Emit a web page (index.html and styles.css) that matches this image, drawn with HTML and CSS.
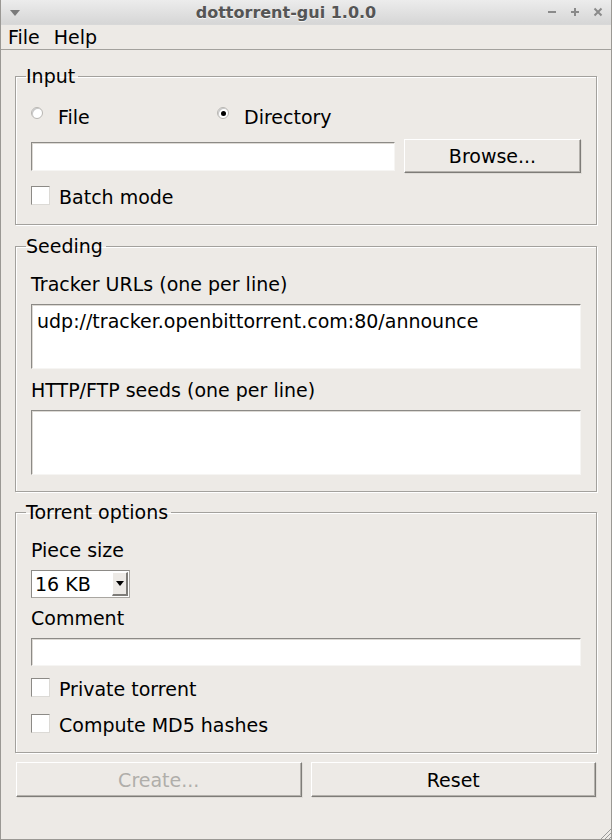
FILE: index.html
```html
<!DOCTYPE html>
<html>
<head>
<meta charset="utf-8">
<link rel="stylesheet" href="styles.css">
</head>
<body>
<div class="window">
  <div class="titlebar">
    <span class="tb-menu"><svg width="10" height="6" viewBox="0 0 10 6"><path d="M0 0H10L5 6Z" fill="#7a7a7a"/></svg></span>
    <span class="title">dottorrent-gui 1.0.0</span>
    <span class="tb-ctrls">
      <svg width="12" height="12" viewBox="0 0 12 12"><path d="M2 6H10" stroke="#8a8a8a" stroke-width="2"/></svg>
      <svg width="12" height="12" viewBox="0 0 12 12"><path d="M2 6H10M6 2V10" stroke="#8a8a8a" stroke-width="2"/></svg>
      <svg width="12" height="12" viewBox="0 0 12 12"><path d="M2.5 2.5L9.5 9.5M9.5 2.5L2.5 9.5" stroke="#8a8a8a" stroke-width="2"/></svg>
    </span>
  </div>
  <div class="menubar"><span>File</span><span>Help</span></div>
  <div class="content">
    <fieldset class="group group-input">
      <legend>Input</legend>
      <div class="radios">
        <label class="radio"><span class="rdot"></span>File</label>
        <label class="radio"><span class="rdot on"></span>Directory</label>
      </div>
      <div class="pathrow">
        <div class="entry path"></div>
        <div class="button browse">Browse...</div>
      </div>
      <label class="check"><span class="cbox"></span>Batch mode</label>
    </fieldset>
    <fieldset class="group group-seed">
      <legend>Seeding</legend>
      <div class="lbl">Tracker URLs (one per line)</div>
      <div class="entry area">udp://tracker.openbittorrent.com:80/announce</div>
      <div class="lbl lbl2">HTTP/FTP seeds (one per line)</div>
      <div class="entry area"></div>
    </fieldset>
    <fieldset class="group group-opts">
      <legend>Torrent options</legend>
      <div class="lbl">Piece size</div>
      <div class="combo"><span class="cval">16 KB</span><span class="carrow"><svg width="8" height="5" viewBox="0 0 8 5"><path d="M0 0H8L4 5Z" fill="#000"/></svg></span></div>
      <div class="lbl lbl3">Comment</div>
      <div class="entry comment"></div>
      <label class="check c2"><span class="cbox"></span>Private torrent</label>
      <label class="check c3"><span class="cbox"></span>Compute MD5 hashes</label>
    </fieldset>
    <div class="actions">
      <div class="button big disabled">Create...</div>
      <div class="button big">Reset</div>
    </div>
  </div>
  <div class="grip"><svg width="12" height="12" viewBox="0 0 12 12"><path d="M12 2L2 12M12 6L6 12M12 10L10 12" stroke="#9a9a9a" stroke-width="1"/></svg></div>
</div>
</body>
</html>
```
FILE: styles.css
```css
* { box-sizing: border-box; }
html, body { margin: 0; padding: 0; }
body {
  width: 612px; height: 840px; overflow: hidden;
  font-family: "DejaVu Sans", sans-serif;
  font-size: 19px; color: #000;
  background: #edeae6;
}
.window {
  position: relative;
  width: 612px; height: 840px;
  border: 1px solid #9a9894;
  border-top: none;
  background: #edeae6;
  display: flex; flex-direction: column;
}
.titlebar {
  height: 25px;
  background: linear-gradient(#ececec, #d6d6d6);
  display: flex; align-items: center;
  position: relative;
  border-bottom: 1px solid #d8d8d8;
}
.tb-menu { position: absolute; left: 9px; top: 9px; line-height: 0; }
.title {
  flex: 1; text-align: center;
  font-weight: bold; font-size: 16px; color: #555555;
  text-shadow: 0 1px 0 #f4f4f4;
  padding-left: 4px; padding-right: 44px;
}
.tb-ctrls {
  position: absolute; right: 7px; top: 6px;
  display: flex; gap: 11px; line-height: 0;
}
.menubar {
  height: 25px;
  display: flex; align-items: center; gap: 14px;
  padding-left: 7px;
  border-bottom: 1px solid #a3a19d;
  font-size: 19px;
}
.content {
  padding: 15px 14px 0 14px;
  display: flex; flex-direction: column;
}
.group {
  margin: 0; padding: 0 15px 0 15px;
  border: 1px solid #a3a19d;
  box-shadow: inset 1px 1px 0 #fff, 1px 1px 0 #fff;
  min-width: 0;
}
.group legend {
  padding: 0 3px 0 0; margin-left: -5px;
  font-size: 19px; line-height: 22px;
}
.group-input { height: 160px; }
.group-seed { height: 257px; margin-top: 10px; }
.group-opts { height: 252px; margin-top: 9px; }
.radios { display: flex; margin-top: 18px; height: 24px; align-items: center; }
.radio { display: flex; align-items: center; }
.radio:first-child { width: 186px; }
.rdot {
  width: 12px; height: 12px; border-radius: 50%;
  background: #fff;
  border: 1px solid #b8b6b2;
  box-shadow: inset 1px 1px 0 #c8c8c8;
  margin-left: 0; margin-right: 15px;
  position: relative; top: -4px;
  display: inline-flex; align-items: center; justify-content: center;
}
.rdot.on::after { content: ""; width: 5px; height: 5px; border-radius: 50%; background: #000; }
.pathrow { display: flex; align-items: center; margin-top: 10px; height: 34px; }
.entry {
  background: #fff;
  border-top: 1px solid #8c8a86; border-left: 1px solid #8c8a86;
  border-right: 1px solid #f6f5f3; border-bottom: 1px solid #f6f5f3;
  box-shadow: inset 1px 1px 0 #dddad5;
}
.path { width: 364px; height: 29px; margin-right: 9px; }
.button {
  display: flex; align-items: center; justify-content: center;
  background: #edeae6;
  border-top: 1px solid #fff; border-left: 1px solid #fff;
  border-right: 1px solid #7e7c78; border-bottom: 1px solid #7e7c78;
  box-shadow: inset -1px -1px 0 #b4b1ac, 1px 1px 0 #e0ddd8;
}
.browse { width: 177px; height: 34px; }
.check { display: flex; align-items: center; height: 24px; }
.group-input .check { margin-top: 12px; }
.cbox {
  width: 19px; height: 19px; background: #fff;
  border-top: 1px solid #8c8a86; border-left: 1px solid #8c8a86;
  border-right: 1px solid #dcdad6; border-bottom: 1px solid #dcdad6;
  margin-right: 9px;
  position: relative; top: -2px;
}
.lbl { height: 24px; line-height: 24px; margin-top: 13px; }
.group-seed .lbl { margin-top: 15px; }
.area { height: 65px; margin-top: 8px; padding: 4px 5px; line-height: 24px; }
.group-seed .lbl2 { margin-top: 9px; }
.group-opts .lbl { margin-top: 15px; }
.combo {
  width: 99px; height: 28px; margin-top: 8px;
  display: flex; background: #fff;
  border: 1px solid #a9a6a1;
  border-top-color: #8c8a86; border-left-color: #8c8a86;
}
.cval { flex: 1; padding-left: 3px; line-height: 26px; }
.carrow {
  width: 16px; height: 24px; margin: 1px 1px 1px 0;
  background: #edeae6;
  border-top: 1px solid #fff; border-left: 1px solid #fff;
  border-right: 2px solid #7e7c78; border-bottom: 2px solid #7e7c78;
  display: flex; align-items: center; justify-content: center;
}
.group-opts .lbl3 { margin-top: 8px; }
.comment { height: 28px; margin-top: 8px; }
.c2 { margin-top: 11px; }
.c3 { margin-top: 12px; }
.actions { display: flex; gap: 9px; margin-top: 9px; padding: 0 1px; }
.big { flex: 1; height: 35px; }
.disabled { color: #b0aeaa; }
.grip { position: absolute; right: 0; bottom: 0; line-height: 0; }
```
